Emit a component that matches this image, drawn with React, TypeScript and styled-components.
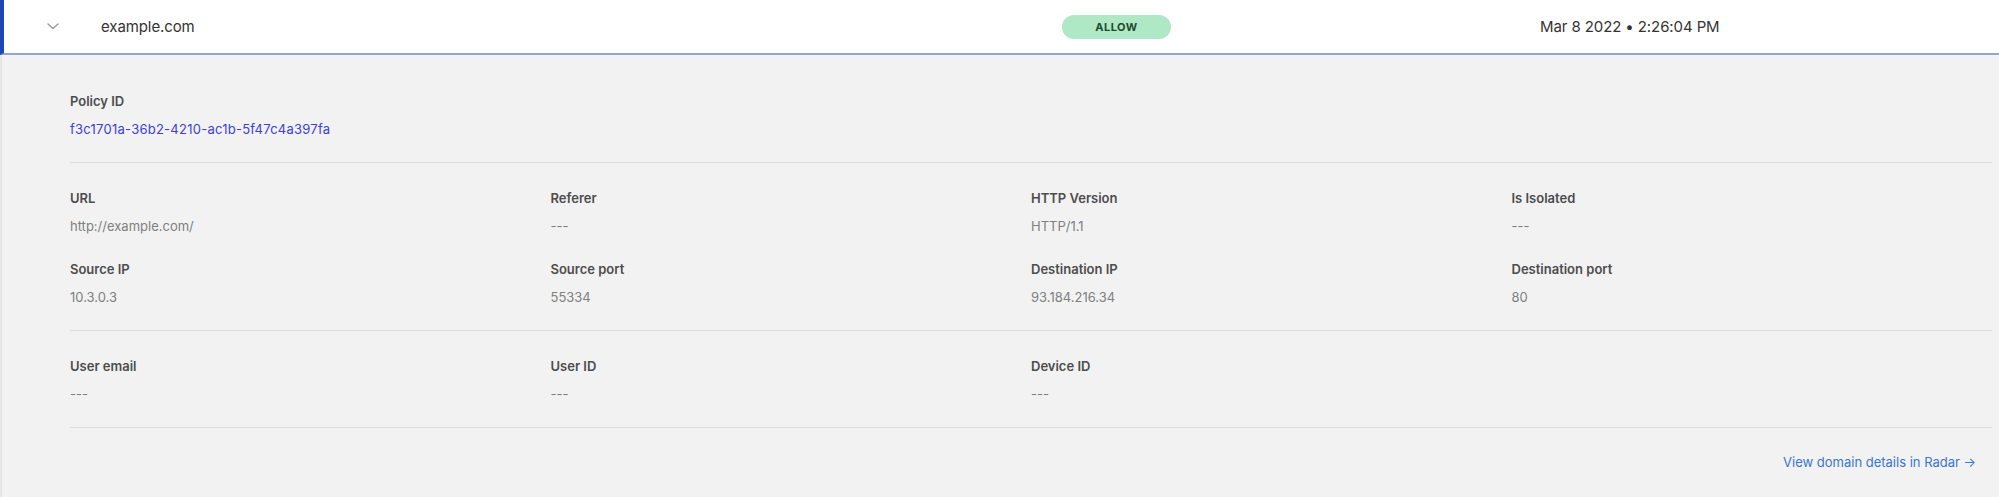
import { createGlobalStyle } from "styled-components"
import styled from "styled-components"

const GlobalStyle = createGlobalStyle`
  html, body {
    margin: 0;
    padding: 0;
    background: #ffffff;
    font-family: Inter, "Noto Sans", "Liberation Sans", sans-serif;
    -webkit-font-smoothing: antialiased;
  }
`

const Row = styled.div`
  display: flex;
  flex-flow: column;
  width: 1999px;
  height: 497px;
`

const Header = styled.div`
  display: grid;
  grid-template-columns: 101px 961px 478px 1fr;
  align-items: center;
  height: 53px;
  flex-shrink: 0;
  background: #ffffff;
  border-left: 4px solid #1b47b8;
  border-bottom: 2px solid #8ea7d6;
`

const ChevronCell = styled.div`
  display: flex;
  align-items: center;
  padding-left: 43px;
  color: #9a9a9a;
`

const Domain = styled.div`
  font-size: 15px;
  letter-spacing: -0.1px;
  color: #333333;
  margin-left: -4px;
`

const BadgeCell = styled.div`
  display: flex;
  align-items: center;
  margin-left: -4px;
`

const Badge = styled.span<{ $tone: "allow" | "block" }>`
  display: inline-flex;
  align-items: center;
  justify-content: center;
  width: 109px;
  height: 24px;
  border-radius: 12px;
  background: ${p => (p.$tone === "allow" ? "#aee8c4" : "#f5c2c2")};
  color: ${p => (p.$tone === "allow" ? "#1e4a2d" : "#6b1d1d")};
  font-size: 11px;
  font-weight: 700;
  letter-spacing: 0.5px;
`

const DateText = styled.div`
  font-size: 15px;
  letter-spacing: -0.1px;
  color: #333333;
  margin-left: -4px;
`

const Details = styled.div`
  flex: 1;
  display: flex;
  flex-flow: column;
  background: #f2f2f2;
  border-left: 2px solid #e6e6e6;
  padding: 11px 7px 0 68px;
`

const Section = styled.div`
  display: grid;
  grid-template-columns: repeat(4, 1fr);
  row-gap: 27px;
  padding: 27px 0 25px;
  border-bottom: 1px solid #dedede;
`

const Field = styled.div`
  display: flex;
  flex-flow: column;
  gap: 12px;
`

const Label = styled.div`
  font-size: 13px;
  line-height: 16px;
  font-weight: 600;
  color: #4d4d4d;
`

const Value = styled.div<{ $accent?: boolean }>`
  font-size: 13px;
  line-height: 16px;
  color: ${p => (p.$accent ? "#3e3ed8" : "#7f7f7f")};
  letter-spacing: ${p => (p.$accent ? "0.25px" : "0")};
  white-space: nowrap;
`

const Footer = styled.div`
  display: flex;
  justify-content: flex-end;
  padding: 26px 16px 0 0;
`

const RadarLink = styled.a`
  font-size: 13px;
  line-height: 16px;
  color: #3a76d0;
  text-decoration: none;
  cursor: pointer;
`

type Item = { label: string; value: string }

const networkFields: Item[] = [
  { label: "URL", value: "http://example.com/" },
  { label: "Referer", value: "---" },
  { label: "HTTP Version", value: "HTTP/1.1" },
  { label: "Is Isolated", value: "---" },
  { label: "Source IP", value: "10.3.0.3" },
  { label: "Source port", value: "55334" },
  { label: "Destination IP", value: "93.184.216.34" },
  { label: "Destination port", value: "80" },
]

const identityFields: Item[] = [
  { label: "User email", value: "---" },
  { label: "User ID", value: "---" },
  { label: "Device ID", value: "---" },
]

const Chevron = () => (
  <svg width="12" height="7" viewBox="0 0 12 7" fill="none">
    <path d="M1 1l5 4.5L11 1" stroke="currentColor" strokeWidth="1.4" strokeLinecap="round" strokeLinejoin="round" />
  </svg>
)

const FieldList = ({ items }: { items: Item[] }) => (
  <>
    {items.map(item => (
      <Field key={item.label}>
        <Label>{item.label}</Label>
        <Value>{item.value}</Value>
      </Field>
    ))}
  </>
)

export default function App() {
  return (
    <>
      <GlobalStyle />
      <Row>
        <Header>
          <ChevronCell>
            <Chevron />
          </ChevronCell>
          <Domain>example.com</Domain>
          <BadgeCell>
            <Badge $tone="allow">ALLOW</Badge>
          </BadgeCell>
          <DateText>Mar 8 2022 • 2:26:04 PM</DateText>
        </Header>
        <Details>
          <Section>
            <Field>
              <Label>Policy ID</Label>
              <Value $accent>f3c1701a-36b2-4210-ac1b-5f47c4a397fa</Value>
            </Field>
          </Section>
          <Section>
            <FieldList items={networkFields} />
          </Section>
          <Section>
            <FieldList items={identityFields} />
          </Section>
          <Footer>
            <RadarLink>View domain details in Radar →</RadarLink>
          </Footer>
        </Details>
      </Row>
    </>
  )
}
